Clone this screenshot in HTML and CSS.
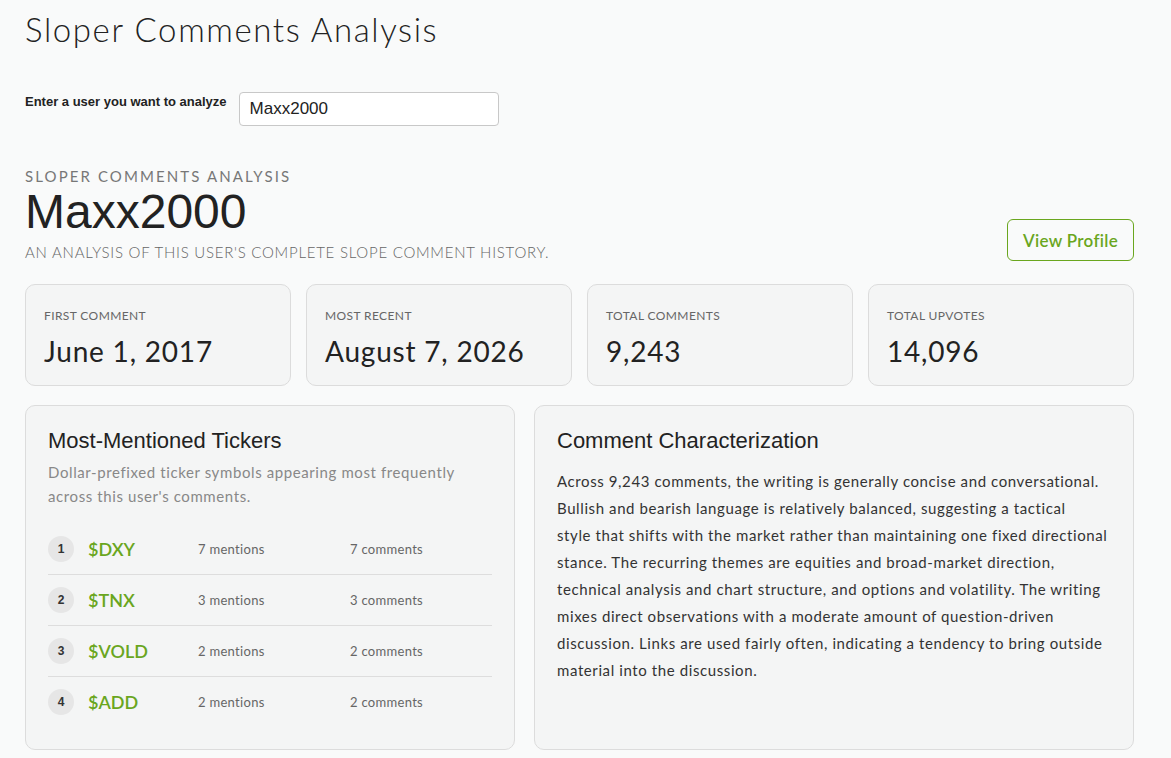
FILE: index.html
```html
<!DOCTYPE html>
<html lang="en">
<head>
    <meta charset="UTF-8">
    <meta name="viewport" content="width=device-width, initial-scale=1.0">
    <title>Sloper Comments Analysis</title>
    <link rel="stylesheet" href="styles.css">
</head>
<body>

    <div class="page">
        <h1 class="page-title">Sloper Comments Analysis</h1>

        <form class="search-form">
            <label for="username">Enter a user you want to analyze</label>
            <input type="text" id="username" value="Maxx2000">
        </form>

        <!-- Report header -->
        <div class="report-header">
            <div>
                <p class="eyebrow">SLOPER COMMENTS ANALYSIS</p>
                <h2 class="username">Maxx2000</h2>
                <p class="subtitle">AN ANALYSIS OF THIS USER'S COMPLETE SLOPE COMMENT HISTORY.</p>
            </div>
            <a class="profile-button" href="#">View Profile</a>
        </div>

        <!-- Summary stats -->
        <div class="stats">
            <div class="stat-card">
                <div class="stat-label">FIRST COMMENT</div>
                <div class="stat-value">June 1, 2017</div>
            </div>
            <div class="stat-card">
                <div class="stat-label">MOST RECENT</div>
                <div class="stat-value">August 7, 2026</div>
            </div>
            <div class="stat-card">
                <div class="stat-label">TOTAL COMMENTS</div>
                <div class="stat-value">9,243</div>
            </div>
            <div class="stat-card">
                <div class="stat-label">TOTAL UPVOTES</div>
                <div class="stat-value">14,096</div>
            </div>
        </div>

        <div class="panels">
            <div class="panel">
                <h3>Most-Mentioned Tickers</h3>
                <p class="panel-desc">Dollar-prefixed ticker symbols appearing most frequently across this user's comments.</p>
                <ul class="ticker-list">
                    <li class="ticker-row">
                        <span class="rank">1</span>
                        <span class="ticker">$DXY</span>
                        <span class="count">7 mentions</span>
                        <span class="count">7 comments</span>
                    </li>
                    <li class="ticker-row">
                        <span class="rank">2</span>
                        <span class="ticker">$TNX</span>
                        <span class="count">3 mentions</span>
                        <span class="count">3 comments</span>
                    </li>
                    <li class="ticker-row">
                        <span class="rank">3</span>
                        <span class="ticker">$VOLD</span>
                        <span class="count">2 mentions</span>
                        <span class="count">2 comments</span>
                    </li>
                    <li class="ticker-row">
                        <span class="rank">4</span>
                        <span class="ticker">$ADD</span>
                        <span class="count">2 mentions</span>
                        <span class="count">2 comments</span>
                    </li>
                </ul>
            </div>

            <div class="panel">
                <h3>Comment Characterization</h3>
                <p class="summary">Across 9,243 comments, the writing is generally concise and conversational. Bullish and bearish language is relatively balanced, suggesting a tactical style&nbsp;that shifts with the market rather than maintaining one fixed directional stance. The recurring themes are equities and broad-market direction, technical analysis and chart structure, and options and volatility. The writing mixes direct observations with a moderate amount of question-driven discussion. Links are used fairly often, indicating a tendency to bring outside material into the discussion.</p>
            </div>
        </div>
    </div>

</body>
</html>
```

FILE: styles.css
```css
body {
    font-family: Lato, "Open Sans", sans-serif;
    margin: 0;
    padding: 0;
    background-color: #f9fafa;
    color: #222;
}

.page {
    width: 1109px;
    padding: 9px 25px 0 25px;
}

.page-title {
    font-size: 33px;
    font-weight: 300;
    letter-spacing: 1.6px;
    margin: 0 0 43px 0;
    color: #222;
}

.search-form {
    display: flex;
    align-items: flex-start;
    gap: 12px;
    margin-bottom: 41px;
}

.search-form label {
    font-family: "Liberation Sans", Arial, sans-serif;
    font-size: 13px;
    font-weight: bold;
    color: #222;
    margin-top: 2px;
}

.search-form input {
    width: 260px;
    height: 34px;
    box-sizing: border-box;
    padding: 0 10px;
    border: 1px solid #c8c8c8;
    border-radius: 4px;
    background: white;
    font-family: "Liberation Sans", Arial, sans-serif;
    font-size: 17px;
    color: #222;
}

.report-header {
    display: flex;
    justify-content: space-between;
    align-items: flex-end;
    margin-bottom: 23px;
}

.eyebrow {
    margin: 0;
    font-size: 15px;
    letter-spacing: 2.1px;
    color: #777;
}

.username {
    font-family: "Liberation Sans", Arial, sans-serif;
    font-size: 48px;
    font-weight: normal;
    line-height: 52px;
    margin: 1px 0 5px 0;
    color: #222;
}

.subtitle {
    margin: 0;
    font-size: 15px;
    font-weight: 300;
    letter-spacing: 0.75px;
    color: #666;
}

.profile-button {
    display: inline-block;
    padding: 10px 15px 9px 15px;
    border: 1px solid #6aa61e;
    border-radius: 6px;
    color: #6aa61e;
    text-decoration: none;
    font-size: 17px;
    font-weight: 600;
    letter-spacing: 0.3px;
}

.stats {
    display: grid;
    grid-template-columns: repeat(4, 1fr);
    gap: 15px;
    margin-bottom: 19px;
}

.stat-card {
    height: 102px;
    box-sizing: border-box;
    padding: 23px 18px;
    background-color: #f4f5f5;
    border: 1px solid #dcdcdc;
    border-radius: 10px;
}

.stat-label {
    font-size: 12px;
    letter-spacing: 0.4px;
    color: #666;
}

.stat-value {
    font-size: 28px;
    letter-spacing: 0.8px;
    margin-top: 11px;
    color: #222;
}

.panels {
    display: grid;
    grid-template-columns: 490px 1fr;
    gap: 19px;
}

.panel {
    height: 345px;
    box-sizing: border-box;
    padding: 22px 22px;
    background-color: #f4f5f5;
    border: 1px solid #dcdcdc;
    border-radius: 10px;
}

.panel h3 {
    font-family: "Liberation Sans", Arial, sans-serif;
    font-size: 22px;
    font-weight: normal;
    margin: 0 0 6px 0;
    color: #222;
}

.panel-desc {
    margin: 0 0 16px 0;
    font-size: 15px;
    line-height: 24px;
    letter-spacing: 0.6px;
    color: #888;
}

.ticker-list {
    list-style: none;
    margin: 0;
    padding: 0;
}

.ticker-row {
    display: grid;
    grid-template-columns: 40px 110px 152px 1fr;
    align-items: center;
    height: 50px;
    border-bottom: 1px solid #ddd;
}

.ticker-row:last-child {
    border-bottom: none;
}

.rank {
    width: 26px;
    height: 26px;
    border-radius: 50%;
    background-color: #e6e6e6;
    display: flex;
    justify-content: center;
    align-items: center;
    font-family: "Liberation Sans", Arial, sans-serif;
    font-size: 12px;
    font-weight: bold;
    color: #333;
}

.ticker {
    font-size: 18px;
    font-weight: 600;
    color: #6aa61e;
}

.count {
    font-size: 13px;
    letter-spacing: 0.3px;
    color: #666;
}

.summary {
    margin: 14px 0 0 0;
    font-size: 15px;
    line-height: 27px;
    letter-spacing: 0.6px;
    color: #333;
}
```
